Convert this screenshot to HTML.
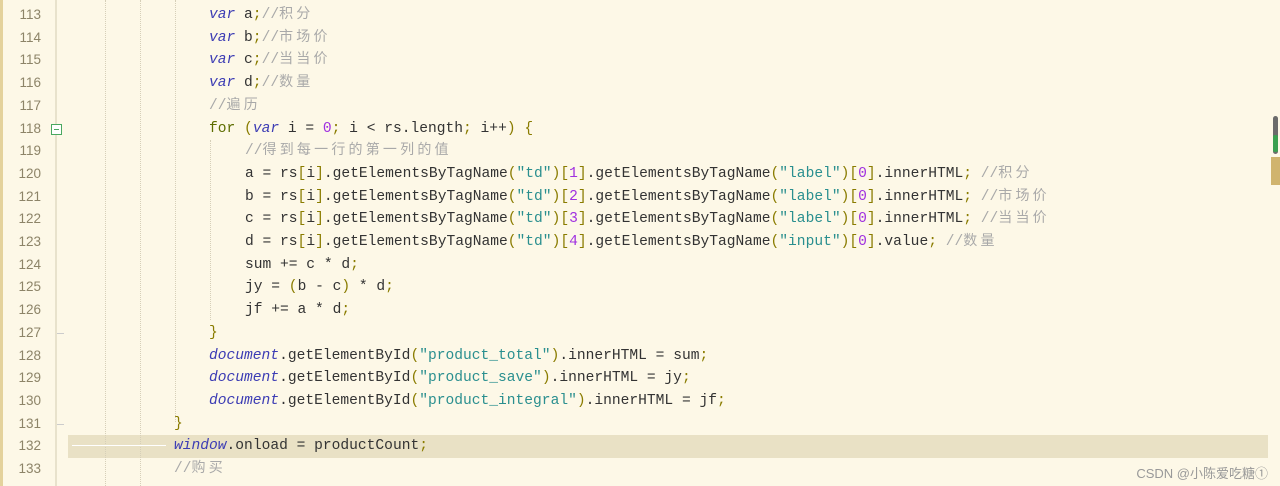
<!DOCTYPE html>
<html><head><meta charset="utf-8"><style>
body{margin:0;width:1280px;height:486px;overflow:hidden;background:#fdf8e7;position:relative;font-family:"Liberation Mono","Noto Sans CJK SC",monospace;font-size:14.6px}
.strip{position:absolute;left:0;top:0;width:3px;height:486px;background:#e4d29c}
.gl{position:absolute;left:55px;top:0;width:2px;height:486px;background:#e8e2cc}
.n{position:absolute;left:0;width:41px;text-align:right;color:#8d8468;font-size:13.5px;font-family:"Liberation Sans",sans-serif;height:22.7px;line-height:22.7px}
.l{position:absolute;white-space:pre;height:22.7px;line-height:22.7px;color:#333}
.g{position:absolute;width:0;border-left:1px dotted #d6cfb8}
.k{color:#3c3cb4;font-style:italic}
.f{color:#5d6d00}
.p{color:#8a7c00}
.s{color:#2a8f8f}
.d{color:#a030e0}
.c{color:#a9a9a9}
.c i{font-style:normal;letter-spacing:3.2px;font-size:14px}
.hl{position:absolute;left:68px;top:435px;width:1200px;height:22.7px;background:#e9e1c5}
</style></head><body>
<div class="strip"></div>
<div class="gl"></div>
<div class="hl"></div>
<div class="g" style="left:105px;top:0;height:486px"></div>
<div class="g" style="left:140px;top:0;height:486px"></div>
<div class="g" style="left:175px;top:0;height:422px"></div>
<div class="g" style="left:210px;top:140px;height:180px"></div>
<div style="position:absolute;left:72px;top:445px;width:94px;border-top:1px solid #fff"></div>
<div style="position:absolute;left:51px;top:124px;width:9px;height:9px;border:1px solid #4aa860;background:#fff"><div style="position:absolute;left:2px;top:4px;width:5px;height:1px;background:#4aa860"></div></div>
<div style="position:absolute;left:57px;top:333px;width:7px;border-top:1px solid #ccc"></div>
<div style="position:absolute;left:57px;top:424px;width:7px;border-top:1px solid #ccc"></div>
<div style="position:absolute;left:1273px;top:116px;width:5px;height:38px;background:#6b6b6b;border-radius:3px"></div>
<div style="position:absolute;left:1273px;top:135px;width:5px;height:17px;background:#3aa050;border-radius:2px"></div>
<div style="position:absolute;left:1271px;top:157px;width:9px;height:28px;background:#d0b46e"></div>

<div class="n" style="top:4px">113</div><div class="l" style="top:4px;left:209px"><span class="k">var</span> a<span class="p">;</span><span class="c">//<i>积分</i></span></div>
<div class="n" style="top:26.7px">114</div><div class="l" style="top:26.7px;left:209px"><span class="k">var</span> b<span class="p">;</span><span class="c">//<i>市场价</i></span></div>
<div class="n" style="top:49.4px">115</div><div class="l" style="top:49.4px;left:209px"><span class="k">var</span> c<span class="p">;</span><span class="c">//<i>当当价</i></span></div>
<div class="n" style="top:72.1px">116</div><div class="l" style="top:72.1px;left:209px"><span class="k">var</span> d<span class="p">;</span><span class="c">//<i>数量</i></span></div>
<div class="n" style="top:94.8px">117</div><div class="l" style="top:94.8px;left:209px"><span class="c">//<i>遍历</i></span></div>
<div class="n" style="top:117.5px">118</div><div class="l" style="top:117.5px;left:209px"><span class="f">for</span> <span class="p">(</span><span class="k">var</span> i = <span class="d">0</span><span class="p">;</span> i &lt; rs.length<span class="p">;</span> i++<span class="p">)</span> <span class="p">{</span></div>
<div class="n" style="top:140.2px">119</div><div class="l" style="top:140.2px;left:245px"><span class="c">//<i>得到每一行的第一列的值</i></span></div>
<div class="n" style="top:162.9px">120</div><div class="l" style="top:162.9px;left:245px">a = rs<span class="p">[</span>i<span class="p">]</span>.getElementsByTagName<span class="p">(</span><span class="s">"td"</span><span class="p">)[</span><span class="d">1</span><span class="p">]</span>.getElementsByTagName<span class="p">(</span><span class="s">"label"</span><span class="p">)[</span><span class="d">0</span><span class="p">]</span>.innerHTML<span class="p">;</span> <span class="c">//<i>积分</i></span></div>
<div class="n" style="top:185.6px">121</div><div class="l" style="top:185.6px;left:245px">b = rs<span class="p">[</span>i<span class="p">]</span>.getElementsByTagName<span class="p">(</span><span class="s">"td"</span><span class="p">)[</span><span class="d">2</span><span class="p">]</span>.getElementsByTagName<span class="p">(</span><span class="s">"label"</span><span class="p">)[</span><span class="d">0</span><span class="p">]</span>.innerHTML<span class="p">;</span> <span class="c">//<i>市场价</i></span></div>
<div class="n" style="top:208.3px">122</div><div class="l" style="top:208.3px;left:245px">c = rs<span class="p">[</span>i<span class="p">]</span>.getElementsByTagName<span class="p">(</span><span class="s">"td"</span><span class="p">)[</span><span class="d">3</span><span class="p">]</span>.getElementsByTagName<span class="p">(</span><span class="s">"label"</span><span class="p">)[</span><span class="d">0</span><span class="p">]</span>.innerHTML<span class="p">;</span> <span class="c">//<i>当当价</i></span></div>
<div class="n" style="top:231px">123</div><div class="l" style="top:231px;left:245px">d = rs<span class="p">[</span>i<span class="p">]</span>.getElementsByTagName<span class="p">(</span><span class="s">"td"</span><span class="p">)[</span><span class="d">4</span><span class="p">]</span>.getElementsByTagName<span class="p">(</span><span class="s">"input"</span><span class="p">)[</span><span class="d">0</span><span class="p">]</span>.value<span class="p">;</span> <span class="c">//<i>数量</i></span></div>
<div class="n" style="top:253.7px">124</div><div class="l" style="top:253.7px;left:245px">sum += c * d<span class="p">;</span></div>
<div class="n" style="top:276.4px">125</div><div class="l" style="top:276.4px;left:245px">jy = <span class="p">(</span>b - c<span class="p">)</span> * d<span class="p">;</span></div>
<div class="n" style="top:299.1px">126</div><div class="l" style="top:299.1px;left:245px">jf += a * d<span class="p">;</span></div>
<div class="n" style="top:321.8px">127</div><div class="l" style="top:321.8px;left:209px"><span class="p">}</span></div>
<div class="n" style="top:344.5px">128</div><div class="l" style="top:344.5px;left:209px"><span class="k">document</span>.getElementById<span class="p">(</span><span class="s">"product_total"</span><span class="p">)</span>.innerHTML = sum<span class="p">;</span></div>
<div class="n" style="top:367.2px">129</div><div class="l" style="top:367.2px;left:209px"><span class="k">document</span>.getElementById<span class="p">(</span><span class="s">"product_save"</span><span class="p">)</span>.innerHTML = jy<span class="p">;</span></div>
<div class="n" style="top:389.9px">130</div><div class="l" style="top:389.9px;left:209px"><span class="k">document</span>.getElementById<span class="p">(</span><span class="s">"product_integral"</span><span class="p">)</span>.innerHTML = jf<span class="p">;</span></div>
<div class="n" style="top:412.6px">131</div><div class="l" style="top:412.6px;left:174px"><span class="p">}</span></div>
<div class="n" style="top:435.3px">132</div><div class="l" style="top:435.3px;left:174px"><span class="k">window</span>.onload = productCount<span class="p">;</span></div>
<div class="n" style="top:458px">133</div><div class="l" style="top:458px;left:174px"><span class="c">//<i>购买</i></span></div>
<div style="position:absolute;right:12px;top:463px;font-family:'Liberation Sans','Noto Sans CJK SC',sans-serif;font-size:13px;color:#999">CSDN @小陈爱吃糖①</div>
</body></html>
